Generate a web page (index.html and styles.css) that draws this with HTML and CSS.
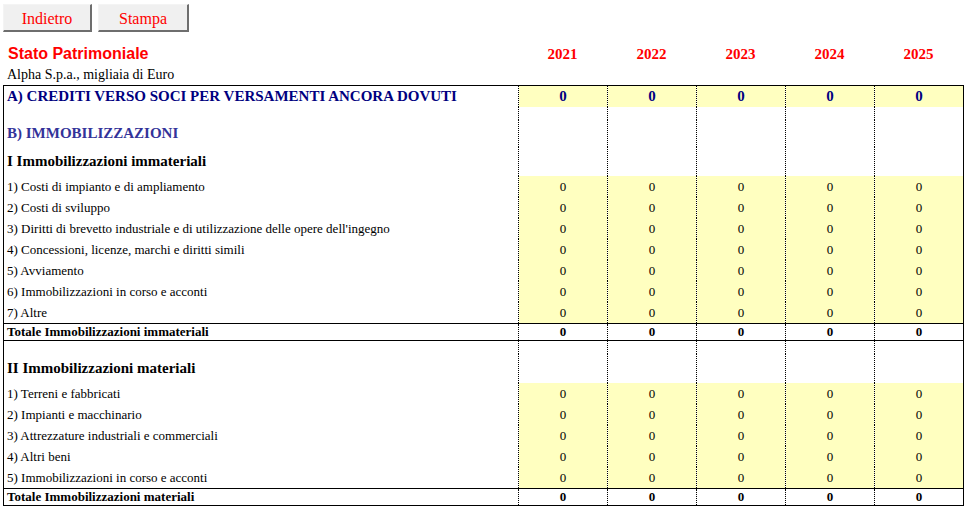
FILE: index.html
```html
<!DOCTYPE html>
<html lang="it">
<head>
<meta charset="utf-8">
<title>Stato Patrimoniale</title>
<link rel="stylesheet" href="styles.css">
</head>
<body>
<div class="toolbar">
  <button class="btn btn-back">Indietro</button>
  <button class="btn btn-print">Stampa</button>
</div>
<div class="head">
  <div class="title">Stato Patrimoniale</div>
  <div class="year">2021</div>
  <div class="year">2022</div>
  <div class="year">2023</div>
  <div class="year">2024</div>
  <div class="year">2025</div>
  <div class="company">Alpha S.p.a., migliaia di Euro</div>
</div>
<table class="sheet">
  <colgroup><col class="c-label"><col class="c-num"><col class="c-num"><col class="c-num"><col class="c-num"><col class="c-num"></colgroup>
  <tbody>
    <tr class="r-a"><td class="lbl">A) CREDITI VERSO SOCI PER VERSAMENTI ANCORA DOVUTI</td><td class="n in">0</td><td class="n in">0</td><td class="n in">0</td><td class="n in">0</td><td class="n in">0</td></tr>
    <tr class="r-sp1"><td class="lbl"></td><td class="n"></td><td class="n"></td><td class="n"></td><td class="n"></td><td class="n"></td></tr>
    <tr class="r-b"><td class="lbl">B) IMMOBILIZZAZIONI</td><td class="n"></td><td class="n"></td><td class="n"></td><td class="n"></td><td class="n"></td></tr>
    <tr class="r-sec"><td class="lbl">I Immobilizzazioni immateriali</td><td class="n"></td><td class="n"></td><td class="n"></td><td class="n"></td><td class="n"></td></tr>
    <tr class="r-item"><td class="lbl">1) Costi di impianto e di ampliamento</td><td class="n in">0</td><td class="n in">0</td><td class="n in">0</td><td class="n in">0</td><td class="n in">0</td></tr>
    <tr class="r-item"><td class="lbl">2) Costi di sviluppo</td><td class="n in">0</td><td class="n in">0</td><td class="n in">0</td><td class="n in">0</td><td class="n in">0</td></tr>
    <tr class="r-item"><td class="lbl">3) Diritti di brevetto industriale e di utilizzazione delle opere dell'ingegno</td><td class="n in">0</td><td class="n in">0</td><td class="n in">0</td><td class="n in">0</td><td class="n in">0</td></tr>
    <tr class="r-item"><td class="lbl">4) Concessioni, licenze, marchi e diritti simili</td><td class="n in">0</td><td class="n in">0</td><td class="n in">0</td><td class="n in">0</td><td class="n in">0</td></tr>
    <tr class="r-item"><td class="lbl">5) Avviamento</td><td class="n in">0</td><td class="n in">0</td><td class="n in">0</td><td class="n in">0</td><td class="n in">0</td></tr>
    <tr class="r-item"><td class="lbl">6) Immobilizzazioni in corso e acconti</td><td class="n in">0</td><td class="n in">0</td><td class="n in">0</td><td class="n in">0</td><td class="n in">0</td></tr>
    <tr class="r-item"><td class="lbl">7) Altre</td><td class="n in">0</td><td class="n in">0</td><td class="n in">0</td><td class="n in">0</td><td class="n in">0</td></tr>
    <tr class="r-tot"><td class="lbl">Totale Immobilizzazioni immateriali</td><td class="n">0</td><td class="n">0</td><td class="n">0</td><td class="n">0</td><td class="n">0</td></tr>
    <tr class="r-sp2"><td class="lbl"></td><td class="n"></td><td class="n"></td><td class="n"></td><td class="n"></td><td class="n"></td></tr>
    <tr class="r-sec"><td class="lbl">II Immobilizzazioni materiali</td><td class="n"></td><td class="n"></td><td class="n"></td><td class="n"></td><td class="n"></td></tr>
    <tr class="r-item"><td class="lbl">1) Terreni e fabbricati</td><td class="n in">0</td><td class="n in">0</td><td class="n in">0</td><td class="n in">0</td><td class="n in">0</td></tr>
    <tr class="r-item"><td class="lbl">2) Impianti e macchinario</td><td class="n in">0</td><td class="n in">0</td><td class="n in">0</td><td class="n in">0</td><td class="n in">0</td></tr>
    <tr class="r-item"><td class="lbl">3) Attrezzature industriali e commerciali</td><td class="n in">0</td><td class="n in">0</td><td class="n in">0</td><td class="n in">0</td><td class="n in">0</td></tr>
    <tr class="r-item"><td class="lbl">4) Altri beni</td><td class="n in">0</td><td class="n in">0</td><td class="n in">0</td><td class="n in">0</td><td class="n in">0</td></tr>
    <tr class="r-item"><td class="lbl">5) Immobilizzazioni in corso e acconti</td><td class="n in">0</td><td class="n in">0</td><td class="n in">0</td><td class="n in">0</td><td class="n in">0</td></tr>
    <tr class="r-tot"><td class="lbl">Totale Immobilizzazioni materiali</td><td class="n">0</td><td class="n">0</td><td class="n">0</td><td class="n">0</td><td class="n">0</td></tr>
  </tbody>
</table>
</body>
</html>
```

FILE: styles.css
```css
html, body {
  margin: 0;
  padding: 0;
  background: #fff;
  font-family: "Liberation Serif", "Times New Roman", serif;
  color: #000;
}

.toolbar {
  display: flex;
  gap: 6px;
  padding: 4px 0 0 3px;
}

.btn {
  height: 28px;
  padding: 2px 0 0 0;
  background: #f0f0f0;
  color: #ff0000;
  font-family: "Liberation Serif", "Times New Roman", serif;
  font-size: 16px;
  border-top: 1px solid #f4f4f4;
  border-left: 1px solid #f4f4f4;
  border-right: 2px solid #6e6e6e;
  border-bottom: 2px solid #6e6e6e;
  box-sizing: border-box;
}

.btn-back { width: 89px; }
.btn-print { width: 91px; }

.head {
  display: grid;
  grid-template-columns: 515px repeat(5, 89px);
  margin: 11px 0 0 3px;
}

.title {
  font-family: "Liberation Sans", Arial, sans-serif;
  font-weight: bold;
  font-size: 16px;
  color: #ff0000;
  line-height: 22px;
  padding-left: 5px;
}

.year {
  text-align: center;
  font-weight: bold;
  font-size: 15px;
  color: #ff0000;
  line-height: 22px;
}

.company {
  grid-column: 1 / -1;
  font-size: 14px;
  line-height: 20px;
  padding-left: 4px;
}

.sheet {
  margin-left: 3px;
  border-collapse: collapse;
  table-layout: fixed;
  width: 961px;
  border: 1px solid #000;
}

.c-label { width: 515px; }
.c-num { width: 89px; }

.sheet td {
  padding: 0 0 0 3px;
  vertical-align: middle;
  white-space: nowrap;
  overflow: hidden;
}

.sheet td.n {
  padding: 0;
  text-align: center;
  border-left: 1px dotted #000;
}

.sheet td.in {
  background: #ffffc0;
}

.r-a td {
  height: 21px;
  font-weight: bold;
  font-size: 15px;
  color: #000080;
}

.r-sp1 td { height: 13px; }
.r-sp2 td { height: 13px; }

.r-b td {
  height: 27px;
  font-weight: bold;
  font-size: 15px;
  color: #333399;
}

.r-sec td {
  height: 29px;
  font-weight: bold;
  font-size: 15px;
}

.r-item td {
  height: 21px;
  font-size: 13px;
}

.r-tot td {
  height: 16px;
  font-weight: bold;
  font-size: 13px;
  border-top: 1px solid #000;
  border-bottom: 1px solid #000;
}
```
